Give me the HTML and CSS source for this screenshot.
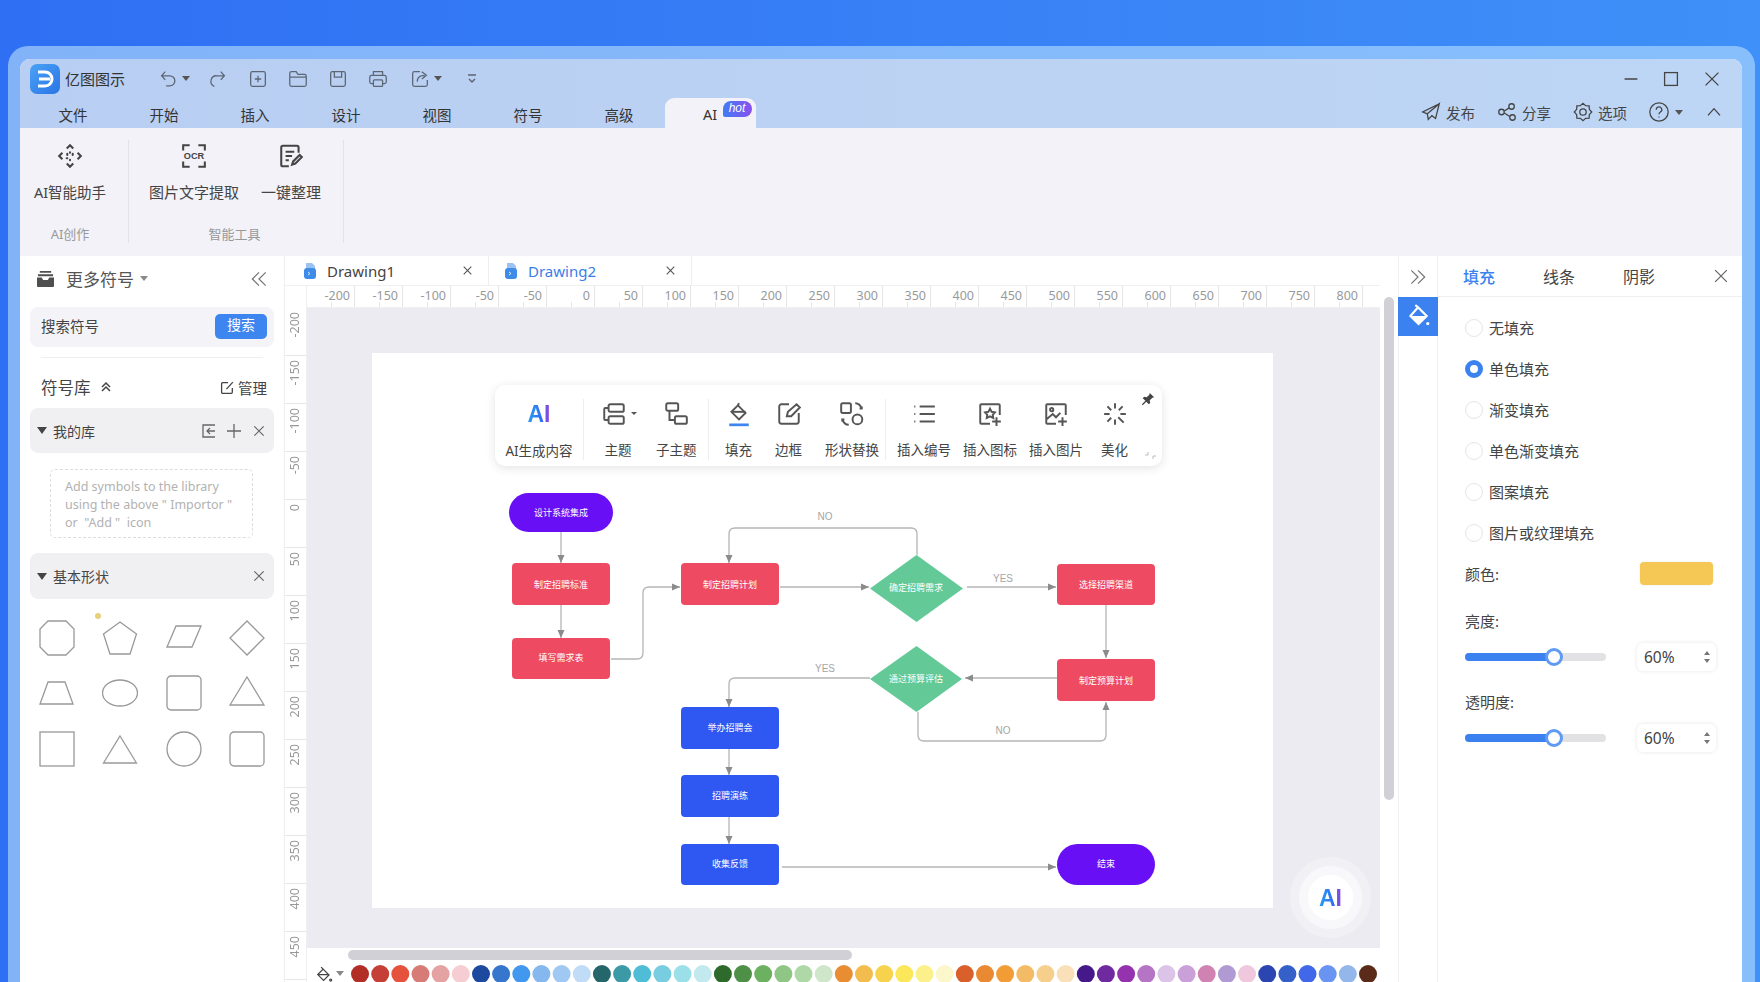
FILE: index.html
```html
<!DOCTYPE html>
<html lang="zh-CN">
<head>
    <meta charset="UTF-8">
    <title>亿图图示</title>
    <link rel="stylesheet" href="styles.css">
</head>
<body>
    <svg class="sprite" xmlns="http://www.w3.org/2000/svg">
        <symbol id="i-close" viewBox="0 0 24 24"><path d="M5 5l14 14M19 5L5 19"/></symbol>
        <symbol id="i-bucket" viewBox="0 0 24 24"><path d="M11 5l7 7-6.500 6.500L4.500 11.500zM11 5L8.500 2.500M5 11.500h13"/><circle cx="20" cy="18" r="1.200"/></symbol>
        <symbol id="i-file" viewBox="0 0 14 18"><path class="file-back" d="M3 1h6l3 3v5H3z"/><rect class="file-front" x="1" y="6" width="12" height="11" rx="3"/><path class="file-mark" d="M5 10l2 1.500L5 13"/></symbol>
        <symbol id="i-chevrons" viewBox="0 0 24 24"><path d="M12 4l-8 8 8 8M20 4l-8 8 8 8"/></symbol>
    </svg>

    <div class="frame">
        <div class="window">
            <header class="titlebar">
                <div class="title-row">
                    <svg class="logo" viewBox="0 0 30 30">
                        <defs><linearGradient id="logo-bg" x1="0" y1="0" x2="1" y2="1"><stop offset="0" stop-color="#4aa2f5"/><stop offset="1" stop-color="#2a74e6"/></linearGradient></defs>
                        <rect width="30" height="30" rx="7" fill="url(#logo-bg)"/>
                        <path d="M8 8h7a7 7 0 0 1 0 14H8M9 15h11" fill="none" stroke="#fff" stroke-width="3"/>
                    </svg>
                    <span class="app-name">亿图图示</span>
                    <div class="quick">
                        <button class="qbtn qbtn-undo"><svg class="ico" viewBox="0 0 24 24"><path d="M9 4L5 8.500l4 4.500M5 8.500h9a5.500 5.500 0 0 1 0 11h-4"/></svg><i class="caret"></i></button>
                        <button class="qbtn"><svg class="ico" viewBox="0 0 24 24"><path d="M15 4l4 4.500-4 4.500M19 8.500h-8a6 6 0 0 0-3 11.500"/></svg></button>
                        <button class="qbtn"><svg class="ico" viewBox="0 0 24 24"><rect x="4" y="4" width="16" height="16" rx="2"/><path d="M12 8.500v7M8.500 12h7"/></svg></button>
                        <button class="qbtn"><svg class="ico" viewBox="0 0 24 24"><path d="M3 8V6a2 2 0 0 1 2-2h5l2 3h7a2 2 0 0 1 2 2v9a2 2 0 0 1-2 2H5a2 2 0 0 1-2-2zM3 10h18"/></svg></button>
                        <button class="qbtn"><svg class="ico" viewBox="0 0 24 24"><rect x="4" y="4" width="16" height="16" rx="2"/><path d="M8 4v6h8V4"/></svg></button>
                        <button class="qbtn"><svg class="ico" viewBox="0 0 24 24"><path d="M7 8V4h10v4M7 17H5a2 2 0 0 1-2-2v-5a2 2 0 0 1 2-2h14a2 2 0 0 1 2 2v5a2 2 0 0 1-2 2h-2"/><rect x="7" y="13" width="10" height="7" rx="1"/></svg></button>
                        <button class="qbtn qbtn-export"><svg class="ico" viewBox="0 0 24 24"><path d="M12 4H6a2 2 0 0 0-2 2v12a2 2 0 0 0 2 2h12a2 2 0 0 0 2-2v-5M9 15c0-5 3-7 8-7M14 4l5 4-5 4"/></svg><i class="caret"></i></button>
                        <button class="qbtn"><svg class="ico-sm" viewBox="0 0 12 12"><path d="M2 2h8M3 6l3 3 3-3"/></svg></button>
                    </div>
                    <div class="win-ctrl">
                        <button class="wbtn"><svg class="ico" viewBox="0 0 24 24"><path d="M5 12h14"/></svg></button>
                        <button class="wbtn"><svg class="ico" viewBox="0 0 24 24"><rect x="5" y="5" width="14" height="14"/></svg></button>
                        <button class="wbtn"><svg class="ico"><use href="#i-close"/></svg></button>
                    </div>
                </div>
                <div class="tab-row">
                    <nav class="menu">
                        <a>文件</a><a>开始</a><a>插入</a><a>设计</a><a>视图</a><a>符号</a><a>高级</a>
                        <a class="active">AI<span class="hot">hot</span></a>
                    </nav>
                    <div class="top-actions">
                        <span class="act"><svg class="ico" viewBox="0 0 24 24"><path d="M21 3L3 12l5 2M21 3L8 14l1 6 4-4 4 3z"/></svg>发布</span>
                        <span class="act"><svg class="ico" viewBox="0 0 24 24"><circle cx="6" cy="12" r="3"/><circle cx="17" cy="6" r="3"/><circle cx="18" cy="18" r="3"/><path d="M9 11l5.500-3.500M9 13l6 4"/></svg>分享</span>
                        <span class="act"><svg class="ico" viewBox="0 0 24 24"><path d="M21.500 12L18.900 9.100 18.700 5.300 14.900 5.100 12 2.500 9.100 5.100 5.300 5.300 5.100 9.100 2.500 12 5.100 14.900 5.300 18.700 9.100 18.900 12 21.500 14.900 18.900 18.700 18.700 18.900 14.900z"/><circle cx="12" cy="12" r="3.500"/></svg>选项</span>
                        <span class="act act-help"><svg class="ico" viewBox="0 0 24 24"><circle cx="12" cy="12" r="10"/><path d="M9 9.500a3 3 0 1 1 4.500 2.500c-1 .6-1.500 1.200-1.500 2.500M12 17v1"/></svg><i class="caret"></i></span>
                        <svg class="ico-sm act-up" viewBox="0 0 12 12"><path d="M1.500 8.500L6 3.500l4.500 5"/></svg>
                    </div>
                </div>
            </header>

            <section class="ribbon">
                <div class="group group-ai">
                    <div class="group-items">
                        <div class="rb-item rb-assist">
                            <svg class="rb-icon" viewBox="0 0 24 24"><path d="M9 5l3-3 3 3M9 19l3 3 3-3M5 9l-3 3 3 3M19 9l3 3-3 3"/><path class="dots" d="M9.500 10v1M14.500 10v1M9 14h.5M12 8.500v.5M12 15.500v.5"/></svg>
                            <span>AI智能助手</span>
                        </div>
                    </div>
                    <div class="group-label">AI创作</div>
                </div>
                <div class="group group-tools">
                    <div class="group-items">
                        <div class="rb-item">
                            <svg class="rb-icon" viewBox="0 0 24 24"><path d="M2 7V2h6M16 2h6v5M22 17v5h-6M8 22H2v-5"/><text class="ocr" x="12" y="15">OCR</text></svg>
                            <span>图片文字提取</span>
                        </div>
                        <div class="rb-item">
                            <svg class="rb-icon" viewBox="0 0 24 24"><path d="M19 9V4a1.500 1.500 0 0 0-1.500-1.500h-13A1.500 1.500 0 0 0 3 4v16a1.500 1.500 0 0 0 1.500 1.500H10M7 8h8M7 12h6M7 16h3M13 20l1-3 6-6 2 2-6 6z"/></svg>
                            <span>一键整理</span>
                        </div>
                    </div>
                    <div class="group-label">智能工具</div>
                </div>
            </section>

            <main class="workspace">
                <aside class="sidebar">
                    <div class="side-head">
                        <svg class="tray" viewBox="0 0 20 18"><path d="M4 1h12v2H4zM2 4.500h16v2H2z"/><path d="M1 8h5l1.500 2.500h5L14 8h5v9a1 1 0 0 1-1 1H2a1 1 0 0 1-1-1z"/></svg>
                        <span class="side-title">更多符号</span><i class="caret caret-grey"></i>
                        <svg class="collapse"><use href="#i-chevrons"/></svg>
                    </div>
                    <div class="search">
                        <span>搜索符号</span>
                        <button class="search-btn">搜索</button>
                    </div>
                    <div class="divider"></div>
                    <div class="lib-head">
                        <span class="lib-title">符号库</span>
                        <svg class="ico-sm lib-fold" viewBox="0 0 12 12"><path d="M2 6l4-4 4 4M2 10l4-4 4 4"/></svg>
                        <span class="manage"><svg class="manage-ico" viewBox="0 0 14 14"><path d="M11.500 7.500v4a1 1 0 0 1-1 1h-8a1 1 0 0 1-1-1v-8a1 1 0 0 1 1-1h5M6 8.500L12 2"/></svg>管理</span>
                    </div>
                    <div class="fold-row">
                        <i class="tri"></i><span>我的库</span>
                        <div class="fold-tools">
                            <svg class="ico-fold" viewBox="0 0 16 16"><path d="M14 2H2v12h12M14 8H6M9 5L6 8l3 3"/></svg>
                            <svg class="ico-fold" viewBox="0 0 16 16"><path d="M8 1v14M1 8h14"/></svg>
                            <svg class="ico-fold"><use href="#i-close"/></svg>
                        </div>
                    </div>
                    <div class="lib-empty">Add symbols to the library<br>using the above " Importor "<br>or &nbsp;"Add " &nbsp;icon</div>
                    <div class="fold-row fold-shapes">
                        <i class="tri"></i><span>基本形状</span>
                        <div class="fold-tools"><svg class="ico-fold"><use href="#i-close"/></svg></div>
                    </div>
                    <div class="shapes">
                        <i class="shape-dot"></i>
                        <svg viewBox="0 0 36 36"><path d="M9 1h18l8 8v18l-8 8H9l-8-8V9z"/></svg>
                        <svg viewBox="0 0 36 36"><path d="M18 2l16.500 12-6.500 20H8L1.500 14z"/></svg>
                        <svg viewBox="0 0 36 36"><path d="M10 6h25l-9 21H1z"/></svg>
                        <svg viewBox="0 0 36 36"><path d="M18 1l17 17-17 17L1 18z"/></svg>
                        <svg viewBox="0 0 36 36"><path d="M9 7h17l8 22H1z"/></svg>
                        <svg viewBox="0 0 36 36"><ellipse cx="18" cy="18" rx="17.500" ry="13"/></svg>
                        <svg viewBox="0 0 36 36"><rect x="1" y="1" width="34" height="34" rx="4"/></svg>
                        <svg viewBox="0 0 36 36"><path d="M18 2l17 28H1z"/></svg>
                        <svg viewBox="0 0 36 36"><rect x="1" y="1" width="34" height="34"/></svg>
                        <svg viewBox="0 0 36 36"><path d="M18 5l16.500 27h-33z"/></svg>
                        <svg viewBox="0 0 36 36"><circle cx="18" cy="18" r="17"/></svg>
                        <svg viewBox="0 0 36 36"><rect x="1" y="1" width="34" height="34" rx="4"/></svg>
                    </div>
                </aside>

                <div class="center">
                    <div class="doc-tabs">
                        <div class="doc-tab"><svg class="file-ico"><use href="#i-file"/></svg><span class="doc-name">Drawing1</span><svg class="doc-close"><use href="#i-close"/></svg></div>
                        <div class="doc-tab doc-tab-active"><svg class="file-ico"><use href="#i-file"/></svg><span class="doc-name">Drawing2</span><svg class="doc-close"><use href="#i-close"/></svg></div>
                    </div>
                    <div class="ruler-corner"></div>
                    <div class="hruler">
                        <span>-200</span><span>-150</span><span>-100</span><span>-50</span><span>-50</span><span>0</span><span>50</span><span>100</span><span>150</span><span>200</span><span>250</span><span>300</span><span>350</span><span>400</span><span>450</span><span>500</span><span>550</span><span>600</span><span>650</span><span>700</span><span>750</span><span>800</span>
                    </div>
                    <div class="vruler">
                        <div><span>-200</span></div><div><span>-150</span></div><div><span>-100</span></div><div><span>-50</span></div><div><span>0</span></div><div><span>50</span></div><div><span>100</span></div><div><span>150</span></div><div><span>200</span></div><div><span>250</span></div><div><span>300</span></div><div><span>350</span></div><div><span>400</span></div><div><span>450</span></div>
                    </div>
                    <div class="stage">
                        <div class="canvas">
                            <div class="page">
                                <svg class="flow" viewBox="372 353 901 555">
                                    <defs>
                                        <marker id="arrow" viewBox="0 0 8 8" refX="8" refY="4" markerUnits="userSpaceOnUse" markerWidth="8" markerHeight="8" orient="auto"><path d="M0 0.500L8 4 0 7.500z" fill="#8b8b8b"/></marker>
                                    </defs>
                                    <g class="links">
                                        <path d="M561 532V563"/>
                                        <path d="M561 605V638"/>
                                        <path d="M611 659H637Q643 659 643 653V593Q643 587 649 587H680"/>
                                        <path d="M917 555V534Q917 528 911 528H735Q729 528 729 534V563"/>
                                        <path d="M780 587H869"/>
                                        <path d="M967 587H1056"/>
                                        <path d="M1106 605V658"/>
                                        <path d="M1057 678H965"/>
                                        <path d="M870 678H735Q729 678 729 684V707"/>
                                        <path d="M918 712V735Q918 741 924 741H1100Q1106 741 1106 735V702"/>
                                        <path d="M729 749V775"/>
                                        <path d="M729 817V844"/>
                                        <path d="M782 867H1056"/>
                                    </g>
                                    <g class="link-labels">
                                        <text x="825" y="520">NO</text>
                                        <text x="1003" y="582">YES</text>
                                        <text x="825" y="672">YES</text>
                                        <text x="1003" y="734">NO</text>
                                    </g>
                                    <rect class="n-pill" x="509" y="493" width="104" height="39" rx="19.500"/>
                                    <rect class="n-red" x="512" y="563" width="98" height="42" rx="4"/>
                                    <rect class="n-red" x="512" y="638" width="98" height="41" rx="4"/>
                                    <rect class="n-red" x="681" y="563" width="98" height="42" rx="4"/>
                                    <rect class="n-red" x="1057" y="564" width="98" height="41" rx="4"/>
                                    <rect class="n-red" x="1057" y="659" width="98" height="42" rx="4"/>
                                    <path class="n-green" d="M916.500 555L963 588.500 916.500 622 870 588.500z"/>
                                    <path class="n-green" d="M916.500 646L962 679 916.500 712 870 679z"/>
                                    <rect class="n-blue" x="681" y="707" width="98" height="42" rx="4"/>
                                    <rect class="n-blue" x="681" y="775" width="98" height="42" rx="4"/>
                                    <rect class="n-blue" x="681" y="844" width="98" height="41" rx="4"/>
                                    <rect class="n-pill" x="1057" y="844" width="98" height="41" rx="20.500"/>
                                    <g class="node-text">
                                        <text x="561" y="516">设计系统集成</text>
                                        <text x="561" y="588">制定招聘标准</text>
                                        <text x="561" y="661">填写需求表</text>
                                        <text x="730" y="588">制定招聘计划</text>
                                        <text x="916" y="591">确定招聘需求</text>
                                        <text x="1106" y="588">选择招聘渠道</text>
                                        <text x="916" y="682">通过预算评估</text>
                                        <text x="1106" y="684">制定预算计划</text>
                                        <text x="730" y="731">举办招聘会</text>
                                        <text x="730" y="799">招聘演练</text>
                                        <text x="730" y="867">收集反馈</text>
                                        <text x="1106" y="867">结束</text>
                                    </g>
                                </svg>

                                <div class="float-bar">
                                    <div class="fb-sec fb-a">
                                        <div class="fb-item"><b class="ai-mark">AI</b><span>AI生成内容</span></div>
                                    </div>
                                    <div class="fb-sec fb-b">
                                        <div class="fb-item fb-caret"><svg class="fb-ico" viewBox="0 0 24 24"><rect x="7" y="3" width="14" height="7" rx="1.500"/><rect x="7" y="14" width="14" height="7" rx="1.500"/><path d="M7 6.500H4a1 1 0 0 0-1 1v9a1 1 0 0 0 1 1h3"/></svg><i class="caret caret-tiny"></i><span>主题</span></div>
                                        <div class="fb-item"><svg class="fb-ico" viewBox="0 0 24 24"><rect x="3" y="2" width="11" height="7" rx="1.500"/><rect x="11" y="14" width="11" height="7" rx="1.500"/><path d="M6 9v8.500h5"/></svg><span>子主题</span></div>
                                    </div>
                                    <div class="fb-sec fb-c">
                                        <div class="fb-item"><svg class="fb-ico" viewBox="0 0 24 24"><path d="M12 2l-1 2 7 7-6 6-7-7 6-6"/><path d="M5 10h13"/><path class="fill-line" d="M3 22h18"/></svg><span>填充</span></div>
                                        <div class="fb-item"><svg class="fb-ico" viewBox="0 0 24 24"><path d="M12 3H5a2 2 0 0 0-2 2v14a2 2 0 0 0 2 2h14a2 2 0 0 0 2-2v-8M10 14l1-4 8-7 3 3-8 8z"/></svg><span>边框</span></div>
                                        <div class="fb-item"><svg class="fb-ico" viewBox="0 0 24 24"><rect x="2" y="2" width="9" height="9" rx="1.500"/><circle cx="17" cy="17" r="4.500"/><path d="M15 2c3 0 5 2 6 5M19 7l2 0 0-2M9 22c-3 0-5-2-6-5M5 17H3v2"/></svg><span>形状替换</span></div>
                                    </div>
                                    <div class="fb-sec fb-d">
                                        <div class="fb-item"><svg class="fb-ico" viewBox="0 0 24 24"><path d="M8 5h14M8 12h14M8 19h14M3 5h1M3 12h1M3 19h1"/></svg><span>插入编号</span></div>
                                        <div class="fb-item"><svg class="fb-ico" viewBox="0 0 24 24"><path d="M12 21H4a1 1 0 0 1-1-1V4a1 1 0 0 1 1-1h16a1 1 0 0 1 1 1v9M18 15v8M14 19h8"/><path d="M12 7l1.500 3 3 .5-2 2.200.5 3-3-1.500-3 1.500.5-3-2-2.200 3-.5z"/></svg><span>插入图标</span></div>
                                        <div class="fb-item"><svg class="fb-ico" viewBox="0 0 24 24"><path d="M12 21H4a1 1 0 0 1-1-1V4a1 1 0 0 1 1-1h16a1 1 0 0 1 1 1v9M18 15v8M14 19h8M3 17l6-5 3 3 4-4"/><circle cx="8" cy="8" r="1.500"/></svg><span>插入图片</span></div>
                                        <div class="fb-item fb-last"><svg class="fb-ico" viewBox="0 0 24 24"><path d="M12 2v5M12 17v5M2 12h5M17 12h5M5 5l3.500 3.500M19 5l-3.500 3.500M5 19l3.500-3.500M15 15l5 5"/></svg><span>美化</span></div>
                                    </div>
                                    <svg class="pin" viewBox="0 0 16 16"><path d="M10 1l5 5-2 .5-3 3 .5 3-1.500 1.500-3-3L2 15l-1-1 4-4-3-3 1.500-1.500 3 .5 3-3z"/></svg>
                                    <svg class="grip" viewBox="0 0 14 12"><path d="M1 7h3V4M9 11V8h3"/></svg>
                                </div>
                            </div>
                            <div class="ai-fab"><b class="ai-mark">AI</b></div>
                        </div>
                        <div class="hscroll"><div class="hscroll-thumb"></div></div>
                        <div class="palette">
                            <svg class="pal-ico"><use href="#i-bucket"/></svg><i class="caret caret-grey"></i>
                            <svg class="swatches" viewBox="0 0 1030 18">
                                <circle cx="9" cy="9" r="9" fill="#b12d25"/><circle cx="29.200" cy="9" r="9" fill="#c63f37"/><circle cx="49.300" cy="9" r="9" fill="#e5533c"/><circle cx="69.500" cy="9" r="9" fill="#d67b76"/><circle cx="89.600" cy="9" r="9" fill="#e5a2a2"/><circle cx="109.800" cy="9" r="9" fill="#f6cdd2"/>
                                <circle cx="130" cy="9" r="9" fill="#1d4a9e"/><circle cx="150.100" cy="9" r="9" fill="#3676cd"/><circle cx="170.300" cy="9" r="9" fill="#4297ee"/><circle cx="190.400" cy="9" r="9" fill="#84b8ee"/><circle cx="210.600" cy="9" r="9" fill="#9fc8f3"/><circle cx="230.800" cy="9" r="9" fill="#c1dcf6"/>
                                <circle cx="250.900" cy="9" r="9" fill="#24666a"/><circle cx="271.100" cy="9" r="9" fill="#3c9aa6"/><circle cx="291.200" cy="9" r="9" fill="#4fbdd6"/><circle cx="311.400" cy="9" r="9" fill="#78cde0"/><circle cx="331.600" cy="9" r="9" fill="#9bdfe9"/><circle cx="351.700" cy="9" r="9" fill="#c1e9ee"/>
                                <circle cx="371.900" cy="9" r="9" fill="#2f6a2d"/><circle cx="392" cy="9" r="9" fill="#4e9048"/><circle cx="412.200" cy="9" r="9" fill="#6cb15f"/><circle cx="432.400" cy="9" r="9" fill="#8fc585"/><circle cx="452.500" cy="9" r="9" fill="#aed8a5"/><circle cx="472.700" cy="9" r="9" fill="#cfe6cb"/>
                                <circle cx="492.800" cy="9" r="9" fill="#e98d33"/><circle cx="513" cy="9" r="9" fill="#f2bc4f"/><circle cx="533.200" cy="9" r="9" fill="#f6d24d"/><circle cx="553.300" cy="9" r="9" fill="#fbe759"/><circle cx="573.500" cy="9" r="9" fill="#fbf08a"/><circle cx="593.600" cy="9" r="9" fill="#fcf7cb"/>
                                <circle cx="613.800" cy="9" r="9" fill="#d9602a"/><circle cx="634" cy="9" r="9" fill="#e98a32"/><circle cx="654.100" cy="9" r="9" fill="#f29c35"/><circle cx="674.300" cy="9" r="9" fill="#f4bb66"/><circle cx="694.400" cy="9" r="9" fill="#f7cf8d"/><circle cx="714.600" cy="9" r="9" fill="#f9e0b8"/>
                                <circle cx="734.800" cy="9" r="9" fill="#45198a"/><circle cx="754.900" cy="9" r="9" fill="#6f2a9f"/><circle cx="775.100" cy="9" r="9" fill="#9433ad"/><circle cx="795.200" cy="9" r="9" fill="#b574c4"/><circle cx="815.400" cy="9" r="9" fill="#dcc3e8"/><circle cx="835.600" cy="9" r="9" fill="#c9a0d8"/><circle cx="855.700" cy="9" r="9" fill="#d083b3"/><circle cx="875.900" cy="9" r="9" fill="#b09ad4"/><circle cx="896" cy="9" r="9" fill="#efc8dd"/>
                                <circle cx="916.200" cy="9" r="9" fill="#2b46b0"/><circle cx="936.400" cy="9" r="9" fill="#3560c9"/><circle cx="956.500" cy="9" r="9" fill="#4168e8"/><circle cx="976.700" cy="9" r="9" fill="#6a94f2"/><circle cx="996.800" cy="9" r="9" fill="#93b7ea"/><circle cx="1017" cy="9" r="9" fill="#5b2b19"/>
                            </svg>
                        </div>
                    </div>
                </div>

                <div class="vscroll"><div class="vscroll-thumb"></div></div>

                <div class="icon-col">
                    <div class="icon-col-head"><svg class="expand"><use href="#i-chevrons"/></svg></div>
                    <div class="icon-col-active">
                        <svg viewBox="0 0 24 24"><path class="bucket-top" d="M12 3l8 8-7.500 7.500L5 11zM12 3L9.500 1"/><path class="bucket-fill" d="M5 11h15l-7.500 7.500z"/><circle class="bucket-fill" cx="21" cy="18" r="1.500"/></svg>
                    </div>
                </div>

                <aside class="panel">
                    <div class="panel-tabs">
                        <span class="ptab ptab-on">填充</span>
                        <span class="ptab">线条</span>
                        <span class="ptab">阴影</span>
                        <svg class="panel-close"><use href="#i-close"/></svg>
                    </div>
                    <div class="panel-body">
                        <div class="radios">
                            <label class="radio"><i></i>无填充</label>
                            <label class="radio radio-on"><i></i>单色填充</label>
                            <label class="radio"><i></i>渐变填充</label>
                            <label class="radio"><i></i>单色渐变填充</label>
                            <label class="radio"><i></i>图案填充</label>
                            <label class="radio"><i></i>图片或纹理填充</label>
                        </div>
                        <div class="color-row"><span>颜色:</span><div class="swatch"></div></div>
                        <div class="field-label">亮度:</div>
                        <div class="slider-row">
                            <div class="track"><div class="track-fill"></div><i class="thumb"></i></div>
                            <div class="num">60%<span class="spin"><i class="sp-up"></i><i class="sp-down"></i></span></div>
                        </div>
                        <div class="field-label field-label-2">透明度:</div>
                        <div class="slider-row">
                            <div class="track"><div class="track-fill"></div><i class="thumb"></i></div>
                            <div class="num">60%<span class="spin"><i class="sp-up"></i><i class="sp-down"></i></span></div>
                        </div>
                    </div>
                </aside>
            </main>
        </div>
    </div>
</body>
</html>
```

FILE: styles.css
```css
* {
    box-sizing: border-box;
}

html, body {
    margin: 0;
    height: 982px;
    overflow: hidden;
}

body {
    padding: 46px 5px 0 8px;
    background: linear-gradient(90deg, #2f6ff3, #3f90f8);
    font-family: "Noto Sans", "Noto Sans CJK SC", sans-serif;
    font-size: 14.5px;
    color: #444;
}

button {
    border: none;
    background: none;
    padding: 0;
    font: inherit;
    color: inherit;
}

i {
    display: block;
}

.sprite {
    display: none;
}

svg {
    flex: none;
    fill: none;
    stroke: currentColor;
    stroke-width: 1.5;
}

.ico {
    width: 22px;
    height: 22px;
    stroke-width: 1.4;
}

.ico-sm {
    width: 12px;
    height: 12px;
}

.caret {
    width: 0;
    height: 0;
    border-left: 4px solid transparent;
    border-right: 4px solid transparent;
    border-top: 5px solid #555;
}

.caret-grey {
    border-top-color: #888;
}

.caret-tiny {
    border-left-width: 3px;
    border-right-width: 3px;
    border-top-width: 3px;
}

/* outer frame and window */
.frame {
    height: 936px;
    padding: 13px 13px 0 12px;
    background: linear-gradient(90deg, #82b3f9, #87bffc);
    border-radius: 20px 20px 0 0;
}

.window {
    height: 923px;
    display: flex;
    flex-direction: column;
    border-radius: 10px 10px 0 0;
    overflow: hidden;
    background: #fff;
}

/* title bar */
.titlebar {
    height: 69px;
    flex: none;
    background: linear-gradient(90deg, #b8cef2, #bed6f5);
}

.title-row {
    height: 39px;
    display: flex;
    align-items: center;
    padding: 0 10px;
}

.logo {
    width: 30px;
    height: 30px;
    stroke: none;
}

.app-name {
    margin-left: 5px;
    width: 60px;
    font-size: 15px;
    color: #333;
}

.quick {
    margin-left: 23px;
    display: flex;
    align-items: center;
    color: #5c6675;
}

.qbtn {
    width: 40px;
    height: 30px;
    display: flex;
    align-items: center;
    justify-content: center;
    gap: 3px;
}

.qbtn-undo {
    width: 50px;
}

.qbtn-export {
    width: 54px;
}

.win-ctrl {
    margin-left: auto;
    display: flex;
    color: #444;
}

.wbtn {
    width: 40.500px;
    height: 30px;
    display: flex;
    align-items: center;
    justify-content: center;
}

.tab-row {
    height: 30px;
    display: flex;
    padding-left: 7.500px;
}

.menu {
    display: flex;
}

.menu a {
    width: 91px;
    display: flex;
    align-items: center;
    justify-content: center;
    padding-top: 2px;
    color: #333;
    position: relative;
}

.menu a.active {
    background: #f2f2f8;
    border-radius: 9px 9px 0 0;
}

.hot {
    position: absolute;
    left: 58px;
    top: 3px;
    width: 29px;
    height: 16px;
    border-radius: 8px 8px 8px 2px;
    background: linear-gradient(90deg, #3f7df3, #8a4ff0);
    color: #fff;
    font: italic 12px/15px "Liberation Sans", sans-serif;
    text-align: center;
}

.top-actions {
    margin-left: auto;
    display: flex;
    align-items: center;
    gap: 21px;
    padding: 0 20px 2px 0;
    color: #444;
}

.act {
    display: flex;
    align-items: center;
    gap: 4px;
}

.act-help {
    gap: 5px;
}

.act-up {
    margin-left: 2px;
    width: 16px;
    height: 16px;
    stroke-width: 1;
}

/* ribbon */
.ribbon {
    height: 128px;
    flex: none;
    display: flex;
    align-items: flex-start;
    padding-top: 12px;
    background: #f2f2f8;
}

.group {
    height: 103px;
    border-right: 1px solid #e2e2e8;
    display: flex;
    flex-direction: column;
    align-items: center;
}

.group-ai {
    width: 109px;
    padding-right: 8px;
}

.group-items {
    display: flex;
    gap: 22px;
    padding: 0 22px 0 20px;
    height: 86px;
}

.group-ai .group-items {
    padding: 0;
}

.rb-item {
    display: flex;
    flex-direction: column;
    align-items: center;
    padding-top: 3px;
    font-size: 15px;
    white-space: nowrap;
}

.rb-assist {
    width: 100px;
    font-size: 14.500px;
}

.rb-icon {
    width: 26px;
    height: 26px;
    margin-bottom: 12px;
    color: #444;
    stroke-width: 1.900;
}

.dots {
    stroke-linecap: round;
}

.ocr {
    font: bold 8.500px "Liberation Sans", sans-serif;
    fill: #444;
    stroke: none;
    text-anchor: middle;
}

.group-label {
    font-size: 13px;
    color: #999;
}

.group-tools .group-label {
    padding-right: 3px;
}

/* main area */
.workspace {
    flex: 1;
    display: flex;
    min-height: 0;
}

.sidebar {
    width: 265px;
    flex: none;
    padding: 0 10px;
    border-right: 1px solid #eee;
}

.side-head {
    height: 51px;
    display: flex;
    align-items: center;
    padding: 0 5px 6px 6px;
    color: #555;
}

.tray {
    width: 19px;
    height: 17px;
    fill: #4f4f4f;
    stroke: none;
}

.side-title {
    margin: 0 6px 0 11px;
    font-size: 17px;
}

.collapse {
    margin-left: auto;
    width: 20px;
    height: 20px;
    color: #777;
    stroke-width: 1.500;
}

.search {
    height: 40px;
    display: flex;
    align-items: center;
    justify-content: space-between;
    padding: 0 7px 0 11px;
    background: #f3f3f8;
    border-radius: 8px;
}

.search > span {
    padding-bottom: 4px;
}

.search-btn {
    width: 52px;
    height: 25px;
    margin-bottom: 1px;
    border-radius: 5px;
    background: #3d86ef;
    color: #fff;
    font-size: 14px;
    line-height: 20px;
    padding-bottom: 3px;
}

.divider {
    height: 1px;
    margin: 10px 11px 0;
    background: #eee;
}

.lib-head {
    height: 50px;
    display: flex;
    align-items: center;
    padding: 8px 7px 0 11px;
}

.lib-title {
    font-size: 16.500px;
}

.lib-fold {
    margin-left: 9px;
}

.manage {
    margin-left: auto;
    display: flex;
    align-items: center;
    gap: 3px;
    font-size: 14.500px;
}

.manage-ico {
    width: 15px;
    height: 15px;
    stroke-width: 1.200;
}

.fold-row {
    height: 45px;
    display: flex;
    align-items: center;
    gap: 6px;
    padding: 0 7px 0 7px;
    background: #f0f0f3;
    border-radius: 8px;
    font-size: 14px;
}

.tri {
    width: 0;
    height: 0;
    border-left: 5px solid transparent;
    border-right: 5px solid transparent;
    border-top: 7px solid #444;
}

.fold-tools {
    margin-left: auto;
    display: flex;
    gap: 9px;
    align-items: center;
    color: #666;
}

.ico-fold {
    width: 16px;
    height: 16px;
    stroke-width: 1.300;
}

.fold-row .ico-fold use {
    stroke-width: 1.800;
}

.lib-empty {
    margin: 16px 21px 0 20px;
    height: 69px;
    padding: 8px 14px 0;
    border: 1px dashed #ddd;
    border-radius: 5px;
    font-size: 12.500px;
    line-height: 18px;
    white-space: nowrap;
    color: #b2b2b2;
}

.fold-shapes {
    margin-top: 15px;
    height: 46px;
}

.shapes {
    position: relative;
    margin: 11px -5px 0;
    display: grid;
    grid-template-columns: repeat(4, 1fr);
    grid-auto-rows: 55.500px;
    place-items: center;
}

.shapes svg {
    width: 36px;
    height: 36px;
    color: #999;
    stroke-width: 1.300;
}

.shape-dot {
    position: absolute;
    left: 70px;
    top: 3px;
    width: 6px;
    height: 6px;
    border-radius: 50%;
    background: #e8cf7a;
}

/* drawing area */
.center {
    width: 1095px;
    flex: none;
    display: grid;
    grid-template-columns: 22px 1fr;
    grid-template-rows: 30px 22px 1fr;
    min-height: 0;
}

.doc-tabs {
    grid-column: 1 / 3;
    display: flex;
    padding-left: 8px;
    border-bottom: 1px solid #f0f0f3;
}

.doc-tab {
    width: 203px;
    display: flex;
    align-items: center;
    padding: 0 14px 0 10px;
    border-right: 1px solid #eee;
    font-size: 15px;
}

.doc-tab:first-child {
    width: 196px;
}

.doc-tab-active {
    color: #3b7de8;
    padding-left: 15px;
}

.file-ico {
    width: 14px;
    height: 18px;
    stroke: none;
}

.file-back {
    fill: #9cc2f3;
}

.file-front {
    fill: #3f8ce8;
}

.file-mark {
    fill: none;
    stroke: #d6e8fb;
    stroke-width: 1;
}

.doc-name {
    margin-left: 10px;
}

.doc-close {
    margin-left: auto;
    width: 13px;
    height: 13px;
    color: #555;
    stroke-width: 2;
}

.ruler-corner {
    border-right: 1px solid #f0f0f3;
}

.hruler {
    display: flex;
    overflow: hidden;
    border-bottom: 1px solid #f0f0f3;
}

.hruler span {
    width: 48px;
    flex: none;
    padding: 0 5px 0 0;
    text-align: right;
    font-size: 12.500px;
    line-height: 20px;
    color: #999;
    background:
        linear-gradient(#e6e6ea, #e6e6ea) right top / 1px 100% no-repeat,
        linear-gradient(#e6e6ea, #e6e6ea) 50% bottom / 1px 5px no-repeat;
}

.vruler {
    overflow: hidden;
    min-height: 0;
    border-right: 1px solid #f0f0f3;
}

.vruler div {
    height: 48px;
    display: flex;
    justify-content: center;
    padding: 4px 1px 0 0;
    border-bottom: 1px solid #e6e6ea;
}

.vruler span {
    writing-mode: vertical-rl;
    transform: rotate(180deg);
    font-size: 12.500px;
    line-height: 20px;
    color: #999;
    align-self: flex-start;
}

.stage {
    display: flex;
    flex-direction: column;
    min-height: 0;
    min-width: 0;
}

.canvas {
    height: 640px;
    flex: none;
    position: relative;
    padding: 45px 0 0 65px;
    background: #ecebf1;
}

.page {
    position: relative;
    width: 901px;
    height: 555px;
    background: #fff;
}

.flow {
    display: block;
    width: 901px;
    height: 555px;
    stroke: none;
}

.links path {
    fill: none;
    stroke: #b5b5b5;
    stroke-width: 1.300;
    marker-end: url(#arrow);
}

.link-labels text {
    font: 10px "Liberation Sans", sans-serif;
    fill: #a5a5a5;
    text-anchor: middle;
}

.n-pill {
    fill: #680ff5;
}

.n-red {
    fill: #ee4b63;
}

.n-green {
    fill: #63c996;
}

.n-blue {
    fill: #2f57f2;
}

.node-text text {
    font-size: 9px;
    fill: #fff;
    text-anchor: middle;
}

.float-bar {
    position: absolute;
    left: 123px;
    top: 32px;
    width: 667px;
    height: 81px;
    display: flex;
    background: #fff;
    border-radius: 10px;
    box-shadow: 0 2px 10px rgba(60, 60, 80, 0.14);
    font-size: 13.500px;
    color: #444;
}

.fb-sec {
    display: flex;
    margin: 14px 0 6px;
    border-right: 1px solid #eee;
}

.fb-a {
    width: 89px;
    justify-content: center;
}

.fb-b {
    width: 125px;
    padding-left: 17px;
    gap: 21px;
}

.fb-c {
    width: 177px;
    padding-left: 16px;
    gap: 23px;
}

.fb-d {
    padding-left: 11px;
    gap: 12px;
    border-right: none;
}

.fb-item {
    position: relative;
    display: flex;
    flex-direction: column;
    align-items: center;
    padding-top: 2px;
    white-space: nowrap;
}

.fb-last {
    margin-left: 6px;
}

.fb-ico {
    width: 26px;
    height: 26px;
    margin-bottom: 12px;
    color: #555;
    stroke-width: 1.800;
}

.fill-line {
    stroke: #3d86ef;
    stroke-width: 2.500;
}

.fb-caret .fb-ico {
    margin-right: 8px;
}

.fb-caret .caret-tiny {
    position: absolute;
    left: 30px;
    top: 13px;
}

.ai-mark {
    font: 700 23px/24px "Liberation Sans", sans-serif;
    background: linear-gradient(90deg, #2d9cf0, #2f6ff3 65%, #a03fd8);
    -webkit-background-clip: text;
    background-clip: text;
    color: transparent;
}

.fb-a .ai-mark {
    margin-bottom: 14px;
    margin-top: 1px;
}

.pin {
    position: absolute;
    right: 7px;
    top: 7px;
    width: 14px;
    height: 14px;
    fill: #444;
    stroke: none;
}

.grip {
    position: absolute;
    right: 4px;
    bottom: 6px;
    width: 14px;
    height: 12px;
    color: #bbb;
    stroke-width: 1;
}

.ai-fab {
    position: absolute;
    right: 9px;
    bottom: 10px;
    width: 81px;
    height: 81px;
    display: flex;
    align-items: center;
    justify-content: center;
    border-radius: 50%;
    background: radial-gradient(circle, #fff 0 22px, #f8f8fb 23px 31px, #f1f1f5 32px);
}

.hscroll {
    height: 14px;
    flex: none;
    padding: 2px 0 2px 41px;
}

.hscroll-thumb {
    width: 504px;
    height: 10px;
    border-radius: 5px;
    background: #d0d0d6;
}

.palette {
    height: 20px;
    flex: none;
    display: flex;
    align-items: flex-start;
    padding: 3px 0 0 7px;
    gap: 2px;
}

.pal-ico {
    width: 20px;
    height: 20px;
    color: #444;
}

.caret.caret-grey {
    margin-top: 6px;
}

.side-head .caret {
    margin-top: 0;
}

.swatches {
    width: 1030px;
    height: 18px;
    margin-left: 5px;
    stroke: none;
    overflow: visible;
}

.vscroll {
    width: 18px;
    flex: none;
    padding: 41px 4px 0;
}

.vscroll-thumb {
    width: 10px;
    height: 503px;
    border-radius: 5px;
    background: #d0d0d6;
}

.icon-col {
    width: 40px;
    flex: none;
    border-left: 1px solid #f0f0f3;
    border-right: 1px solid #f0f0f3;
}

.icon-col-head {
    height: 41px;
    display: flex;
    align-items: center;
    justify-content: center;
    color: #777;
}

.expand {
    width: 20px;
    height: 20px;
    transform: scaleX(-1);
    stroke-width: 1.500;
}

.icon-col-active {
    height: 39px;
    margin: 0 -1px;
    display: flex;
    align-items: center;
    justify-content: center;
    background: #3b82f0;
}

.icon-col-active svg {
    width: 26px;
    height: 26px;
    color: #fff;
    stroke-width: 2;
}

.bucket-fill {
    fill: #fff;
    stroke: none;
}

/* format panel */
.panel {
    flex: 1;
    min-width: 0;
}

.panel-tabs {
    height: 41px;
    display: flex;
    align-items: center;
    padding: 0 11px 0 25px;
    border-bottom: 1px solid #f0f0f3;
    gap: 48px;
    font-size: 16px;
}

.ptab-on {
    color: #3b82f0;
    font-weight: 500;
}

.panel-close {
    margin-left: auto;
    width: 20px;
    height: 20px;
    color: #666;
    stroke-width: 1.500;
}

.panel-body {
    padding: 10px 26px 0 27px;
    font-size: 15px;
}

.radio {
    height: 41px;
    display: flex;
    align-items: center;
    gap: 6px;
}

.radio i {
    width: 18px;
    height: 18px;
    border-radius: 50%;
    border: 1.500px solid #e5e5e8;
}

.radio-on i {
    border: 5px solid #3b82f0;
}

.color-row {
    margin-top: 9px;
    height: 23px;
    display: flex;
    align-items: center;
    justify-content: space-between;
    padding-right: 3px;
}

.swatch {
    width: 73px;
    height: 23px;
    border-radius: 4px;
    background: #f5c755;
    box-shadow: 0 0 3px rgba(0, 0, 0, 0.08);
}

.field-label {
    margin-top: 26px;
    line-height: 20px;
}

.field-label-2 {
    margin-top: 21px;
}

.slider-row {
    margin-top: 12px;
    height: 28px;
    display: flex;
    align-items: center;
    justify-content: space-between;
}

.track {
    position: relative;
    width: 141px;
    height: 8px;
    border-radius: 4px;
    background: #e2e2e4;
}

.track-fill {
    width: 89px;
    height: 8px;
    border-radius: 4px;
    background: #3b82f0;
}

.thumb {
    position: absolute;
    left: 80px;
    top: -5px;
    width: 18px;
    height: 18px;
    border-radius: 50%;
    background: #fff;
    border: 3px solid #5f9bf2;
}

.num {
    width: 79px;
    height: 28px;
    display: flex;
    align-items: center;
    justify-content: space-between;
    padding: 0 6px 0 7px;
    border-radius: 6px;
    box-shadow: 0 0 4px rgba(0, 0, 0, 0.1);
    font-size: 15.500px;
}

.spin {
    display: flex;
    flex-direction: column;
    gap: 4px;
}

.sp-up, .sp-down {
    width: 0;
    height: 0;
    border-left: 3px solid transparent;
    border-right: 3px solid transparent;
}

.sp-up {
    border-bottom: 4px solid #777;
}

.sp-down {
    border-top: 4px solid #777;
}
```
